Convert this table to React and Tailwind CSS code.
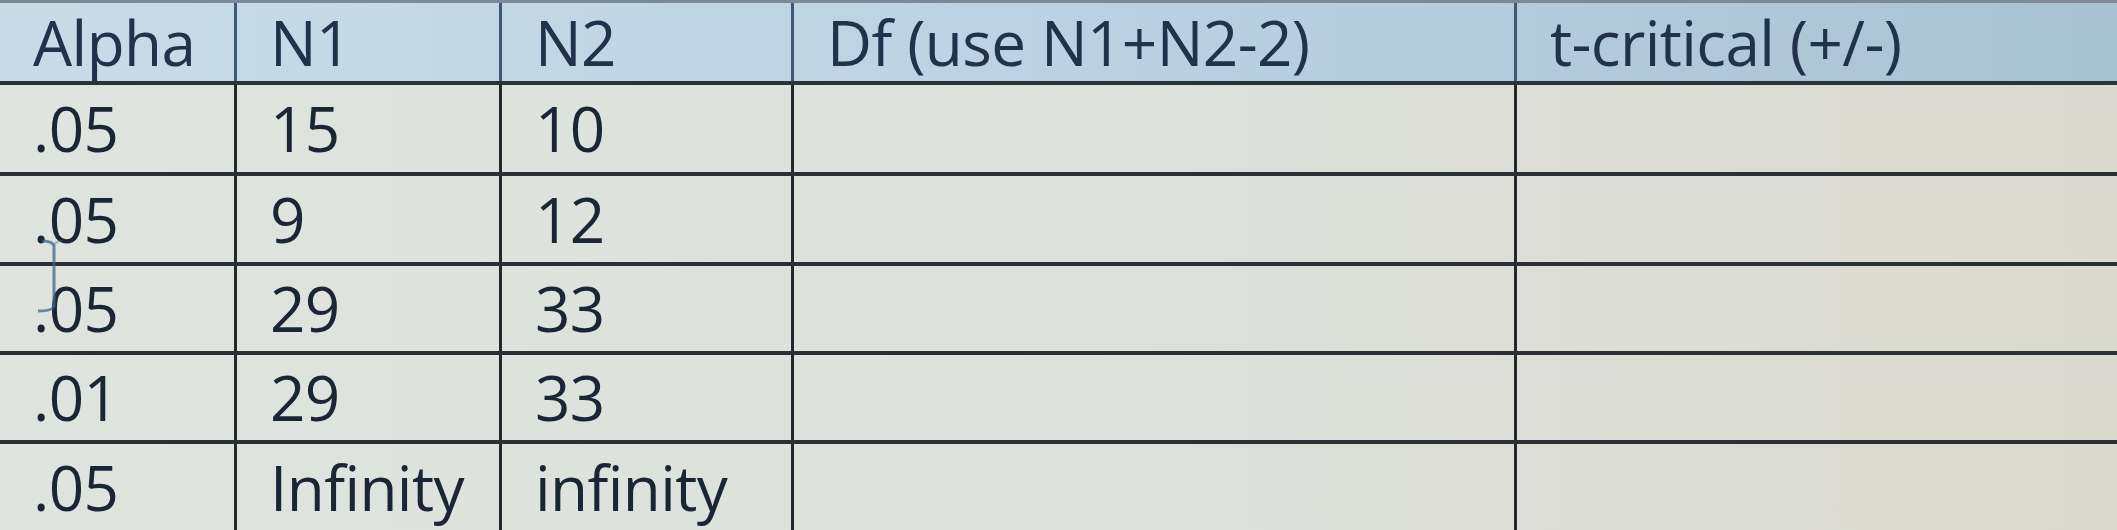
import React from "react";

// Photographed spreadsheet: t-critical worksheet
const headers = ["Alpha", "N1", "N2", "Df (use N1+N2-2)", "t-critical (+/-)"];

const rows = [
  { h: "h-[91px]", cells: [".05", "15", "10", "", ""] },
  { h: "h-[90px]", cells: [".05", "9", "12", "", ""] },
  { h: "h-[89px]", cells: [".05", "29", "33", "", ""] },
  { h: "h-[89px]", cells: [".01", "29", "33", "", ""] },
  { h: "h-[86px]", cells: [".05", "Infinity", "infinity", "", ""] },
];

const cols = "grid grid-cols-[237px_265px_292px_723px_1fr]";

function Cell({ children, last, header }) {
  return (
    <div
      className={`flex items-center pl-[33px] whitespace-nowrap ${
        last ? "" : header ? "border-r-[3px] border-[#3d5a72]" : "border-r-[3px] border-[#22282c]"
      }`}
    >
      {children}
    </div>
  );
}

function IBeam() {
  return (
    <svg
      className="absolute left-[34px] top-[236px] pointer-events-none"
      width="30"
      height="80"
      viewBox="0 0 30 80"
      fill="none"
    >
      <path d="M8 5 C14 5 19 6 20 10 L20 70 C19 74 13 75 4 75" stroke="#3f6684" strokeWidth="3" opacity="0.75" />
      <path d="M20 10 C21 6 25 5 28 5" stroke="#3f6684" strokeWidth="2" opacity="0.4" />
    </svg>
  );
}

export default function App() {
  return (
    <div
      className="relative w-[2117px] h-[530px] overflow-hidden bg-[#dcdfd9] text-[62px] text-[#1b2635]"
      style={{ fontFamily: '"Open Sans", "Noto Sans", sans-serif' }}
    >
      <div className={`${cols} h-[85px] border-t-[3px] border-[#7b8a94] border-b-[4px] border-b-[#2c3336] bg-linear-to-r from-[#c9dbe7] via-[#bcd2e2] to-[#a9c2d1] text-[#22324a]`}>
        {headers.map((t, i) => (
          <Cell key={t} header last={i === headers.length - 1}>
            <span className="leading-[1.1] tracking-[-0.6px]">{t}</span>
          </Cell>
        ))}
      </div>
      <div className="bg-linear-to-r from-[#dfe4df] via-[#dde1dc] to-[#dbdad0]">
        {rows.map((r, ri) => (
          <div
            key={ri}
            className={`${cols} ${r.h} ${ri < rows.length - 1 ? "border-b-[4px] border-[#2a3033]" : ""}`}
          >
            {r.cells.map((c, ci) => (
              <Cell key={ci} last={ci === r.cells.length - 1}>
                <span className="leading-[1.2] tracking-[-0.6px]">{c}</span>
              </Cell>
            ))}
          </div>
        ))}
      </div>
      <IBeam />
    </div>
  );
}
